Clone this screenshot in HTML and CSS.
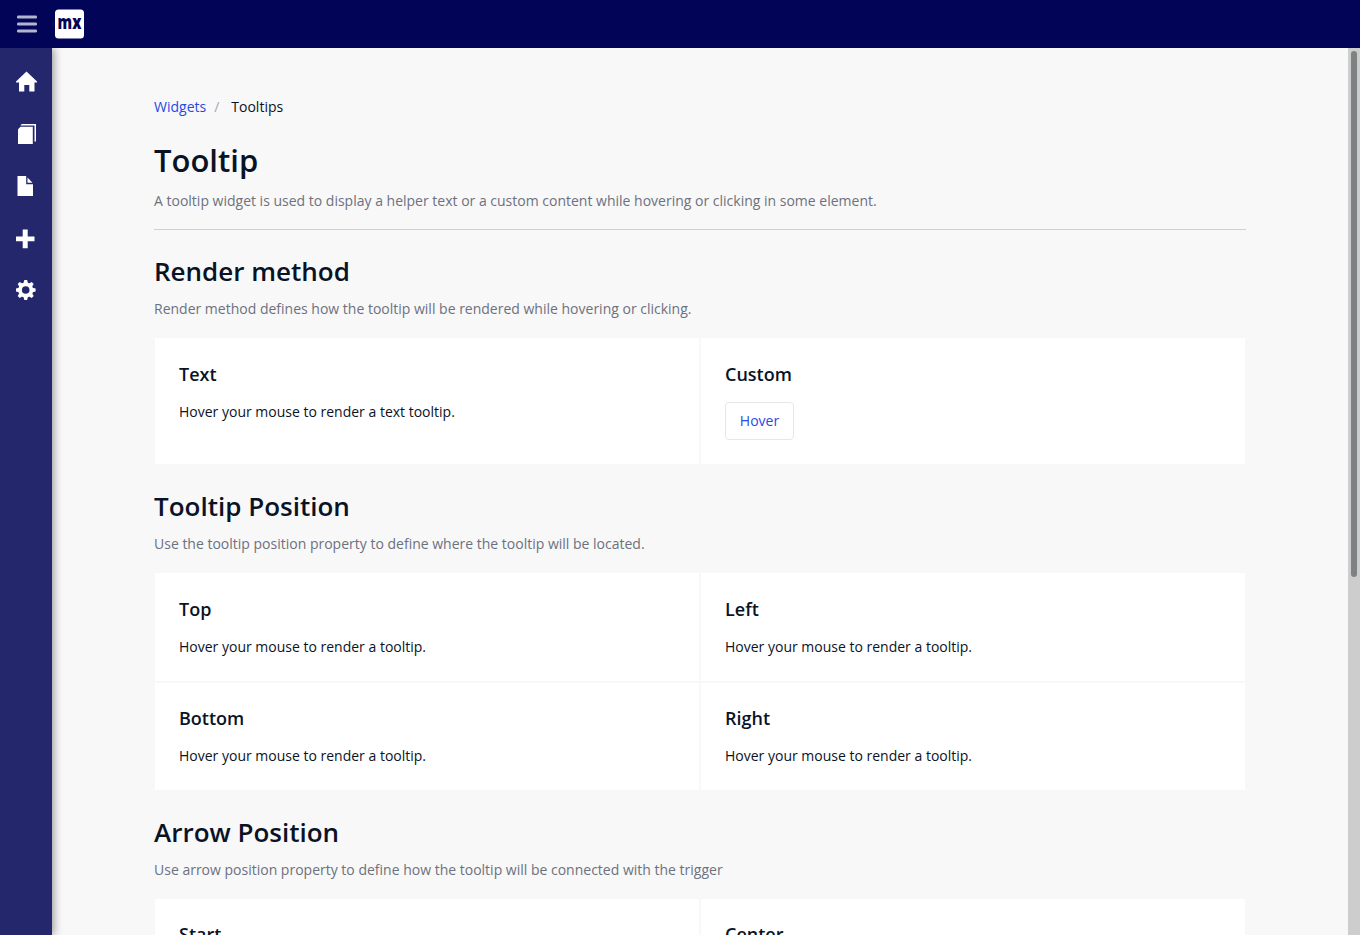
FILE: index.html
```html
<!DOCTYPE html>
<html lang="en">
<head>
<meta charset="utf-8">
<title>Tooltip</title>
<link rel="stylesheet" href="styles.css">
</head>
<body>
<header class="topbar">
  <svg class="menu-icon" width="20" height="18" viewBox="0 0 20 18"><g fill="#b3b4cd"><rect y="0.4" width="20" height="3.2" rx="1.4"/><rect y="7.4" width="20" height="3.2" rx="1.4"/><rect y="14.4" width="20" height="3.2" rx="1.4"/></g></svg>
  <svg class="logo" width="30" height="30" viewBox="0 0 30 30"><rect x="0" y="0.4" width="29" height="29.2" rx="3.5" fill="#fff"/><text x="2.600" y="20.300" textLength="23.800" lengthAdjust="spacingAndGlyphs" class="logo-text">mx</text></svg>
</header>
<div class="shell">
  <nav class="sidebar">
    <a class="nav-item"><svg width="22" height="22" viewBox="0 0 22 22"><path fill="#fff" d="M10.500.4 21 10.500v1h-2.500v9h-5.200V14H8.300v6.500H3v-9H0v-1z"/></svg></a>
    <a class="nav-item"><svg width="22" height="22" viewBox="0 0 22 22"><path fill="#fff" d="M4.500 3.700h12.300V21H2V6.200z"/><path fill="#fff" d="M5.800 1H20v17.500h-1.500V2.400H4.300z"/></svg></a>
    <a class="nav-item"><svg width="22" height="22" viewBox="0 0 22 22"><path fill="#fff" d="M1.500 1h8.700v8.200H17V21H1.500zM11.500 2.500l5 5.200h-5z"/></svg></a>
    <a class="nav-item"><svg width="22" height="22" viewBox="0 0 22 22"><path fill="#fff" d="M6.700 2.500h5v7h6.800v4.800h-6.800v7h-5v-7H0V9.500h6.700z"/></svg></a>
    <a class="nav-item"><svg width="22" height="22" viewBox="0 0 22 22"><g transform="translate(9.700 11)"><circle r="5.700" fill="none" stroke="#fff" stroke-width="3.800"/><g fill="#fff"><path id="tooth" d="M-2.300-6.500-1.400-9.900H1.400L2.300-6.500z"/><use href="#tooth" transform="rotate(45)"/><use href="#tooth" transform="rotate(90)"/><use href="#tooth" transform="rotate(135)"/><use href="#tooth" transform="rotate(180)"/><use href="#tooth" transform="rotate(225)"/><use href="#tooth" transform="rotate(270)"/><use href="#tooth" transform="rotate(315)"/></g></g></svg></a>
  </nav>
  <main class="content">
    <div class="breadcrumb"><a class="crumb-link">Widgets</a><span class="crumb-sep">/</span><span>Tooltips</span></div>
    <div class="page-header">
      <h1 class="title">Tooltip</h1>
      <p class="detail">A tooltip widget is used to display a helper text or a custom content while hovering or clicking in some element.</p>
    </div>
    <section class="section">
      <h2 class="heading">Render method</h2>
      <p class="detail">Render method defines how the tooltip will be rendered while hovering or clicking.</p>
      <div class="cards">
        <div class="card card-tall"><h4 class="card-title">Text</h4><p class="card-text">Hover your mouse to render a text tooltip.</p></div>
        <div class="card card-tall"><h4 class="card-title">Custom</h4><button class="btn">Hover</button></div>
      </div>
    </section>
    <section class="section">
      <h2 class="heading">Tooltip Position</h2>
      <p class="detail">Use the tooltip position property to define where the tooltip will be located.</p>
      <div class="cards">
        <div class="card"><h4 class="card-title">Top</h4><p class="card-text">Hover your mouse to render a tooltip.</p></div>
        <div class="card"><h4 class="card-title">Left</h4><p class="card-text">Hover your mouse to render a tooltip.</p></div>
        <div class="card card-snug"><h4 class="card-title">Bottom</h4><p class="card-text">Hover your mouse to render a tooltip.</p></div>
        <div class="card card-snug"><h4 class="card-title">Right</h4><p class="card-text">Hover your mouse to render a tooltip.</p></div>
      </div>
    </section>
    <section class="section">
      <h2 class="heading">Arrow Position</h2>
      <p class="detail">Use arrow position property to define how the tooltip will be connected with the trigger</p>
      <div class="cards">
        <div class="card card-snug"><h4 class="card-title">Start</h4></div>
        <div class="card card-snug"><h4 class="card-title">Center</h4></div>
      </div>
    </section>
  </main>
  <div class="scrollbar"><div class="thumb"></div></div>
</div>
</body>
</html>
```
FILE: styles.css
```css
* { box-sizing: border-box; }
html, body { height: 100%; }
body {
  margin: 0;
  display: flex;
  flex-direction: column;
  overflow: hidden;
  background: #f8f8f8;
  color: #0a1326;
  font: 14px/20px "Open Sans", sans-serif;
}
h1, h2, h4, p { margin: 0; font-weight: 600; }
.topbar {
  height: 48px;
  flex: none;
  display: flex;
  align-items: center;
  gap: 18px;
  padding-left: 17px;
  background: #020557;
}
.logo { overflow: visible; }
.logo-text { font: 800 19px "Open Sans", sans-serif; fill: #020557; }
.shell { flex: 1; min-height: 0; display: flex; }
.sidebar {
  width: 52px;
  flex: none;
  padding-top: 8px;
  background: #24276c;
  box-shadow: 2px 0 8px rgba(0, 0, 0, 0.38);
  clip-path: inset(0 -20px 0 0);
}
.nav-item { display: flex; align-items: center; height: 52px; padding-left: 16px; }
.content { flex: 1; padding: 49px 102px 0; overflow: hidden; }
.breadcrumb { display: flex; height: 20px; }
.crumb-link { color: #264ae5; }
.crumb-sep { color: #a4a7b2; padding: 0 12px 0 8px; }
.page-header { padding: 21px 0 18px; border-bottom: 1px solid #ced0d3; }
.title { font-size: 31px; line-height: 44px; margin-bottom: 9px; }
.detail { color: #6c717e; font-weight: 400; }
.section { padding-top: 23px; }
.heading { font-size: 26px; line-height: 36px; margin-bottom: 10px; }
.cards { display: grid; grid-template-columns: 1fr 1fr; margin-top: 18px; }
.card { height: 110px; padding: 24px; background: #fff; border: 1px solid #f8f8f8; }
.card-tall { height: 128px; }
.card-snug { height: 109px; padding-top: 23px; }
.card-title { font-size: 18px; line-height: 24px; margin-bottom: 16px; }
.card-text { font-weight: 400; line-height: 20px; }
.btn {
  display: block;
  width: 69px;
  height: 38px;
  padding: 0;
  border: 1px solid #e7e7e9;
  border-radius: 4px;
  background: #fff;
  color: #264ae5;
  font: inherit;
}
.scrollbar { width: 12px; flex: none; padding: 3px 3px 0; background: #cdcdcd; }
.thumb { width: 6px; height: 526px; border-radius: 3px; background: #7e8282; }
```
